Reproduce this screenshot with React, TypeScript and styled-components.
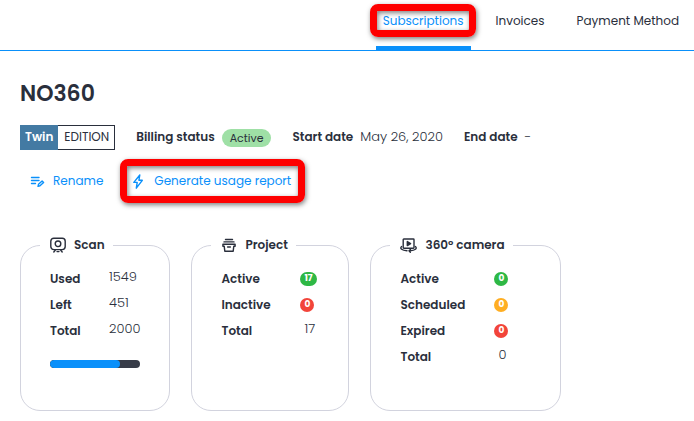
import React from 'react';
import styled, { createGlobalStyle, css } from 'styled-components';

const ink = '#2a2f3c';
const blue = '#0a90fa';
const tones = { green: '#2eb845', amber: '#ffae22', red: '#f2443a' };
type Tone = keyof typeof tones;

const GlobalStyle = createGlobalStyle`
  *, *::before, *::after { box-sizing: border-box; }
  body {
    margin: 0;
    background: #fff;
    color: ${ink};
    font-family: Poppins, Inter, sans-serif;
    font-size: 12px;
    line-height: 18px;
  }
`;

const marker = css`
  position: relative;
  &::after {
    content: '';
    position: absolute;
    border: 7px solid #fe0000;
    border-radius: 8px;
    box-shadow: 1px 2px 5px rgba(0, 0, 0, 0.5), inset 1px 2px 5px rgba(0, 0, 0, 0.5);
    pointer-events: none;
  }
`;

const TabBar = styled.nav`
  display: flex;
  justify-content: flex-end;
  gap: 18px;
  height: 51px;
  padding-right: 8px;
  border-bottom: 1px solid ${blue};
  white-space: nowrap;
`;

const Tab = styled.a<{ $active?: boolean }>`
  padding: 12px 7px 0;
  border-bottom: 4px solid ${p => (p.$active ? blue : 'transparent')};
  color: ${p => (p.$active ? blue : ink)};
  text-decoration: none;
  ${p => p.$active && css`
    ${marker}
    &::after { top: 4px; bottom: 9px; left: -6px; right: -5px; }
  `}
`;

const Content = styled.main`
  padding: 29px 20px 10px;
`;

const Title = styled.h1`
  margin: 0 0 18px;
  font-size: 22px;
  line-height: 27px;
  font-weight: 600;
`;

const Details = styled.div`
  display: flex;
  align-items: center;
  gap: 21px;
  white-space: nowrap;
`;

const Edition = styled.div`
  display: flex;
  border: 1px solid ${ink};
  line-height: 21px;
`;

const EditionName = styled.strong`
  margin: -1px 0 -1px -1px;
  padding: 1px 5px 3px;
  background: #437aa3;
  color: #fff;
  font-weight: 600;
`;

const EditionKind = styled.span`
  padding: 0 5px 2px 6px;
`;

const Detail = styled.div`
  display: flex;
  align-items: center;
  gap: 7px;
`;

const DetailLabel = styled.span`
  padding-bottom: 2px;
  font-weight: 600;
`;

const DetailValue = styled.span`
  padding-bottom: 1px;
  font-size: 13px;
  font-weight: 300;
`;

const StatusPill = styled.span`
  padding: 0 8px;
  border-radius: 9px;
  background: #9fe0a6;
  font-size: 11px;
`;

const Actions = styled.div`
  display: flex;
  gap: 29px;
  padding: 22px 10px 0;
`;

const ActionButton = styled.button<{ $marked?: boolean }>`
  display: flex;
  align-items: center;
  gap: 8px;
  padding: 0;
  border: 0;
  background: none;
  color: ${blue};
  font: inherit;
  cursor: pointer;
  ${p => p.$marked && css`
    ${marker}
    &::after { top: -13px; bottom: -13px; left: -12px; right: -14px; }
  `}
`;

const Cards = styled.div`
  display: flex;
  flex-wrap: wrap;
  gap: 21px;
  padding-top: 46px;
`;

const Card = styled.fieldset`
  min-width: 0;
  margin: 0;
  padding: 12px 29px 40px;
  border: 1px solid #d2d3de;
  border-radius: 20px;
`;

const CardTitle = styled.legend`
  display: flex;
  align-items: center;
  gap: 8px;
  margin-left: -10px;
  padding: 0 8px 0 10px;
  font-weight: 600;
  white-space: nowrap;
`;

const Stats = styled.dl<{ $label: number; $value: number }>`
  display: grid;
  grid-template-columns: minmax(${p => p.$label}px, auto) minmax(${p => p.$value}px, auto);
  grid-auto-rows: 26px;
  align-items: center;
  margin: 0;
`;

const StatLabel = styled.dt`
  font-weight: 600;
`;

const StatValue = styled.dd<{ $inset?: boolean }>`
  margin: 0;
  padding: 0 0 4px ${p => (p.$inset ? 4 : 0)}px;
  font-size: 13px;
  font-weight: 300;
`;

const StatCount = styled.dd<{ $tone: Tone }>`
  justify-self: start;
  min-width: 14px;
  margin: 0;
  padding: 0 4px 1px;
  border-radius: 7px;
  background: ${p => tones[p.$tone]};
  color: #fff;
  font-size: 9px;
  font-weight: 700;
  line-height: 13px;
  text-align: center;
`;

const Usage = styled.div`
  height: 8px;
  margin-top: 16px;
  border-radius: 4px;
  overflow: hidden;
  background: #373c48;
`;

const UsageFill = styled.div`
  height: 100%;
  border-radius: 4px;
  background: ${blue};
`;

const Icon = styled.svg`
  flex: none;
  fill: none;
  stroke: currentColor;
  stroke-width: 1.4;
  stroke-linecap: round;
  stroke-linejoin: round;
`;

const RenameIcon = () => (
  <Icon width="15" height="14" viewBox="0 0 15 14" aria-hidden>
    <path d="M1.5 3.5h7.5M1.5 6.5h7.5M1.5 9.5h4" />
    <path d="M8 12.3l.5-2 3.6-3.3 1.5 1.5-3.6 3.3z" />
  </Icon>
);

const BoltIcon = () => (
  <Icon width="14" height="16" viewBox="0 0 14 16" aria-hidden>
    <path d="M7.8 2L1.8 9.4h3.4L4.3 15.2l6-7.9H6.9z" />
  </Icon>
);

const ScanIcon = () => (
  <Icon width="16" height="16" viewBox="0 0 16 16" aria-hidden>
    <rect x=".8" y="1.2" width="14.4" height="11.4" rx="3" />
    <circle cx="8" cy="6.8" r="2.8" />
    <path d="M5.2 13.2L3.8 15M10.8 13.2l1.4 1.8M7 14.6h2" />
  </Icon>
);

const ProjectIcon = () => (
  <Icon width="16" height="16" viewBox="0 0 16 16" aria-hidden>
    <path d="M4.5 2.5h7M3 4.9h10" />
    <path d="M1.9 7.3h12.2v1.9h-1.3l-.6 5H3.8l-.6-5H1.9zM6.6 10h2.8" />
  </Icon>
);

const CameraIcon = () => (
  <Icon width="17" height="16" viewBox="0 0 17 16" aria-hidden>
    <rect x="3.2" y="2" width="10.8" height="9.2" rx=".6" />
    <path d="M7.3 4.6v4l3.3-2z" fill="currentColor" />
    <path d="M1.6 9.6C-.6 11.6 2 13.4 7 13.8M15.4 9.6c2.2 2-.2 3.8-5.4 4.2M10.4 12.4L9 13.8l1.3 1.4" />
  </Icon>
);

const cameraCounts: { label: string; count: number; tone: Tone }[] = [
  { label: 'Active', count: 0, tone: 'green' },
  { label: 'Scheduled', count: 0, tone: 'amber' },
  { label: 'Expired', count: 0, tone: 'red' },
];

const used = 1549;
const total = 2000;

export default function App() {
  return (
    <>
      <GlobalStyle />
      <TabBar>
        <Tab href="#subscriptions" $active aria-current="page">Subscriptions</Tab>
        <Tab href="#invoices">Invoices</Tab>
        <Tab href="#payment">Payment Method</Tab>
      </TabBar>
      <Content>
        <Title>NO360</Title>
        <Details>
          <Edition>
            <EditionName>Twin</EditionName>
            <EditionKind>EDITION</EditionKind>
          </Edition>
          <Detail>
            <DetailLabel>Billing status</DetailLabel>
            <StatusPill>Active</StatusPill>
          </Detail>
          <Detail>
            <DetailLabel>Start date</DetailLabel>
            <DetailValue>May 26, 2020</DetailValue>
          </Detail>
          <Detail>
            <DetailLabel>End date</DetailLabel>
            <DetailValue>-</DetailValue>
          </Detail>
        </Details>
        <Actions>
          <ActionButton type="button"><RenameIcon />Rename</ActionButton>
          <ActionButton type="button" $marked><BoltIcon />Generate usage report</ActionButton>
        </Actions>
        <Cards>
          <Card>
            <CardTitle><ScanIcon />Scan</CardTitle>
            <Stats $label={59} $value={31}>
              <StatLabel>Used</StatLabel>
              <StatValue>{used}</StatValue>
              <StatLabel>Left</StatLabel>
              <StatValue>{total - used}</StatValue>
              <StatLabel>Total</StatLabel>
              <StatValue>{total}</StatValue>
            </Stats>
            <Usage role="progressbar" aria-label="Scans used" aria-valuenow={used} aria-valuemax={total}>
              <UsageFill style={{ width: `${(used / total) * 100}%` }} />
            </Usage>
          </Card>
          <Card>
            <CardTitle><ProjectIcon />Project</CardTitle>
            <Stats $label={79} $value={19}>
              <StatLabel>Active</StatLabel>
              <StatCount $tone="green">17</StatCount>
              <StatLabel>Inactive</StatLabel>
              <StatCount $tone="red">0</StatCount>
              <StatLabel>Total</StatLabel>
              <StatValue $inset>17</StatValue>
            </Stats>
          </Card>
          <Card>
            <CardTitle><CameraIcon />360° camera</CardTitle>
            <Stats $label={94} $value={37}>
              {cameraCounts.map(({ label, count, tone }) => (
                <React.Fragment key={label}>
                  <StatLabel>{label}</StatLabel>
                  <StatCount $tone={tone}>{count}</StatCount>
                </React.Fragment>
              ))}
              <StatLabel>Total</StatLabel>
              <StatValue $inset>0</StatValue>
            </Stats>
          </Card>
        </Cards>
      </Content>
    </>
  );
}
